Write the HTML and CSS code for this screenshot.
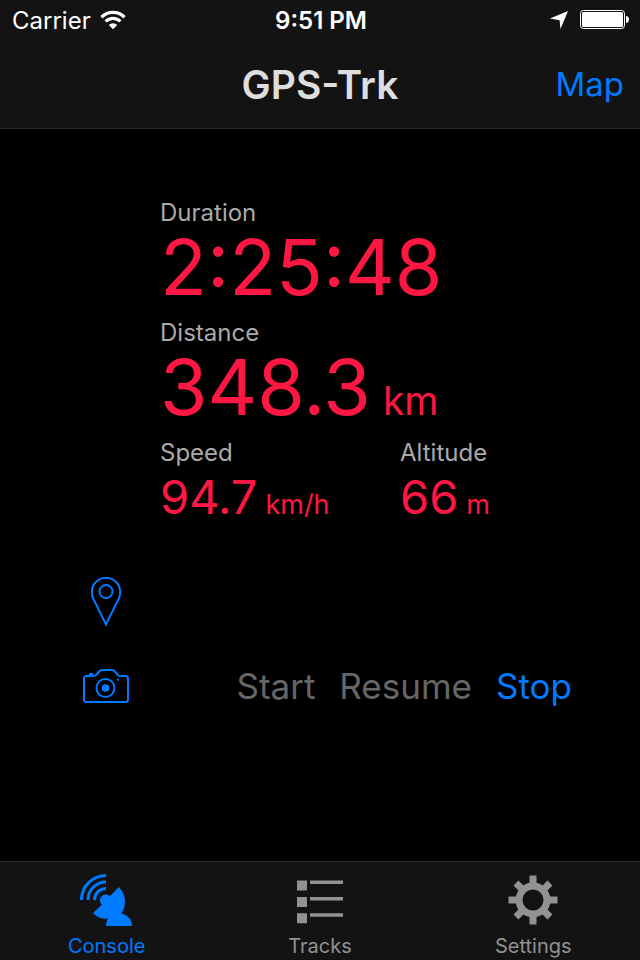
FILE: index.html
```
<!DOCTYPE html>
<html lang="en">
<head>
  <meta charset="UTF-8">
  <meta name="viewport" content="width=device-width, initial-scale=1.0">
  <title>GPS-Trk</title>
  <link rel="stylesheet" href="styles.css">
</head>
<body>
  <header class="top">
    <div class="status">
      <div class="status-left">
        <span>Carrier</span>
        <svg width="26" height="20" viewBox="0 0 26 20" fill="none" stroke="#fff" aria-hidden="true">
          <path d="M1.500 7.200a16.200 16.200 0 0 1 23 0" stroke-width="3.400"/>
          <path d="M5.600 11.400a10.500 10.500 0 0 1 14.800 0" stroke-width="3.200"/>
          <path d="M8.800 14.900a6 6 0 0 1 8.400 0L13 19.200z" fill="#fff" stroke="none"/>
        </svg>
      </div>
      <time class="clock">9:51 PM</time>
      <div class="status-right">
        <svg width="18" height="18" viewBox="0 0 18 18" fill="#fff" aria-hidden="true">
          <path d="M18 0L10.500 18L9.600 9.200L0 7.600z"/>
        </svg>
        <svg width="50" height="20" viewBox="0 0 50 20" aria-hidden="true">
          <rect x="0.5" y="0.5" width="44" height="18" rx="3" fill="none" stroke="#fff"/>
          <rect x="2" y="2" width="41" height="15" rx="1.5" fill="#fff"/>
          <path d="M46 6c4 0 4 7 0 7z" fill="#fff"/>
        </svg>
      </div>
    </div>
    <nav class="navbar">
      <h1>GPS-Trk</h1>
      <a class="map-link" href="#map">Map</a>
    </nav>
  </header>

  <main>
    <dl class="readings">
      <div class="reading wide">
        <dt>Duration</dt>
        <dd class="big">2:25:48</dd>
      </div>
      <div class="reading wide">
        <dt>Distance</dt>
        <dd class="big">348.3 <span class="unit">km</span></dd>
      </div>
      <div class="reading">
        <dt>Speed</dt>
        <dd>94.7 <span class="unit">km/h</span></dd>
      </div>
      <div class="reading">
        <dt>Altitude</dt>
        <dd>66 <span class="unit">m</span></dd>
      </div>
    </dl>

    <div class="controls">
      <button class="icon-button" type="button" aria-label="Add waypoint">
        <svg width="32" height="50" viewBox="0 0 32 50" fill="none" stroke="currentColor" stroke-width="2">
          <path d="M16 47.500L3.200 21.500C1.800 18.500 1.800 16 1.800 15a14.200 14.200 0 0 1 28.400 0c0 1 0 3.500-1.400 6.500z"/>
          <circle cx="16" cy="14.500" r="6.500"/>
        </svg>
      </button>
      <div class="shutter-row">
        <button class="icon-button" type="button" aria-label="Take photo">
          <svg width="46" height="34" viewBox="0 0 46 34" fill="none" stroke="currentColor" stroke-width="2">
            <path d="M3.500 7H11c1 0 1.500-.3 2-1l4-4.200c.6-.6 1-.8 2-.8h10c1 0 1.400.2 2 .8l4 4.200c.5.700 1 1 2 1h5.500c1.600 0 2.500.9 2.500 2.500V30.500c0 1.600-.9 2.500-2.500 2.500h-39C1.900 33 1 32.100 1 30.500v-21C1 7.900 1.900 7 3.500 7z"/>
            <path d="M5.500 6.500l1-2.500h3.500l.8 2.500z" fill="currentColor" stroke="none"/>
            <circle cx="22.500" cy="19" r="9"/>
            <circle cx="22.500" cy="19" r="3.800" fill="currentColor" stroke="none"/>
            <path d="M34 9.500h2v2h-2z" fill="currentColor" stroke="none"/>
          </svg>
        </button>
        <div class="actions">
          <button type="button" disabled>Start</button>
          <button type="button" disabled>Resume</button>
          <button type="button">Stop</button>
        </div>
      </div>
    </div>
  </main>

  <nav class="tabs">
    <a class="tab active" href="#console">
      <svg width="54" height="54" viewBox="0 0 54 54" fill="currentColor" aria-hidden="true">
        <g fill="none" stroke="currentColor" stroke-width="3">
          <path d="M1.500 27A24.500 24.500 0 0 1 26 2.500"/>
          <path d="M8 27A18 18 0 0 1 26 9"/>
          <path d="M14.500 27A11.500 11.500 0 0 1 26 15.500"/>
        </g>
        <path d="M39 14c3.500 4 6 9 6 14 0 5-1.200 9.500-3.800 12.500C47 41.500 52 46 52 53H26c0-2.500.6-5 2-7.200-6 .4-11.500-1.800-15-5.800l8.800-8.200A5.200 5.200 0 0 1 30 23z"/>
      </svg>
      <span>Console</span>
    </a>
    <a class="tab" href="#tracks">
      <svg width="46" height="54" viewBox="0 0 46 54" fill="currentColor" aria-hidden="true">
        <path d="M0 7.500h10v10H0zM0 24h10v10H0zM0 40.200h10v10H0z"/>
        <path d="M13 7.500h33v3.500H13zM13 24h33v3.500H13zM13 40.200h33v3.500H13z"/>
      </svg>
      <span>Tracks</span>
    </a>
    <a class="tab" href="#settings">
      <svg width="54" height="54" viewBox="-27 -27 54 54" aria-hidden="true">
        <g stroke="currentColor" stroke-width="7">
          <circle r="14" fill="none"/>
          <path d="M0-24.500V-15M0 24.500V15M-24.500 0H-15M24.500 0H15M-17-17l6 6M17-17l-6 6M-17 17l6-6M17 17l-6-6"/>
        </g>
      </svg>
      <span>Settings</span>
    </a>
  </nav>
</body>
</html>
```

FILE: styles.css
```
* {
  box-sizing: border-box;
}
body {
  display: flex;
  flex-direction: column;
  min-height: 100vh;
  margin: 0;
  background-color: #000;
  color: #fff;
  font-family: Inter, "Liberation Sans", sans-serif;
}
a {
  color: #007aff;
  text-decoration: none;
}
button {
  padding: 0;
  border: none;
  background: none;
  color: #007aff;
  font: inherit;
  cursor: pointer;
}
button:disabled {
  color: #666;
  cursor: default;
}
svg {
  display: block;
}

/* status bar and title */
.top {
  background-color: #131313;
  border-bottom: 1px solid #2b2b2b;
}
.status,
.navbar {
  display: grid;
  grid-template-columns: 1fr auto 1fr;
  align-items: center;
}
.status {
  height: 40px;
  padding: 0 10px 0 12px;
  font-size: 24px;
}
.status-left,
.status-right {
  display: flex;
  align-items: center;
  gap: 9px;
}
.status-right {
  justify-content: flex-end;
  gap: 12px;
}
.clock {
  font-weight: 600;
}
.navbar {
  height: 88px;
  padding: 0 16px;
}
h1 {
  grid-column: 2;
  margin: 0;
  color: #dedede;
  font-size: 39px;
  font-weight: 600;
}
.map-link {
  justify-self: end;
  font-size: 33px;
}

/* readings */
main {
  flex: 1;
  padding-top: 70px;
}
.readings {
  display: grid;
  grid-template-columns: 1fr 1fr;
  row-gap: 12px;
  margin: 0;
  padding-left: 25%;
}
.wide {
  grid-column: 1 / -1;
}
dt {
  color: #aaa;
  font-size: 24px;
  line-height: 28px;
}
dd {
  display: flex;
  align-items: baseline;
  gap: 8px;
  margin: 0;
  color: #ff1744;
  font-size: 47px;
  line-height: 60px;
  white-space: nowrap;
}
.unit {
  font-size: 27px;
  line-height: 1;
}
.big {
  gap: 12px;
  font-size: 77px;
  line-height: 80px;
}
.big .unit {
  font-size: 39px;
}

/* controls */
.controls {
  display: flex;
  flex-direction: column;
  gap: 34px;
  padding: 50px 68px 0 80px;
}
.icon-button {
  display: flex;
  justify-content: center;
  align-items: center;
  width: 52px;
  height: 50px;
}
.shutter-row {
  display: flex;
  justify-content: space-between;
  align-items: center;
}
.actions {
  display: flex;
  gap: 24px;
  font-size: 35px;
}

/* tab bar */
.tabs {
  display: grid;
  grid-template-columns: repeat(3, 1fr);
  background-color: #131313;
  border-top: 1px solid #2b2b2b;
}
.tab {
  display: flex;
  flex-direction: column;
  align-items: center;
  gap: 6px;
  height: 98px;
  padding-top: 11px;
  color: #929292;
  font-size: 20px;
  line-height: 26px;
}
.active {
  color: #007aff;
}
```
